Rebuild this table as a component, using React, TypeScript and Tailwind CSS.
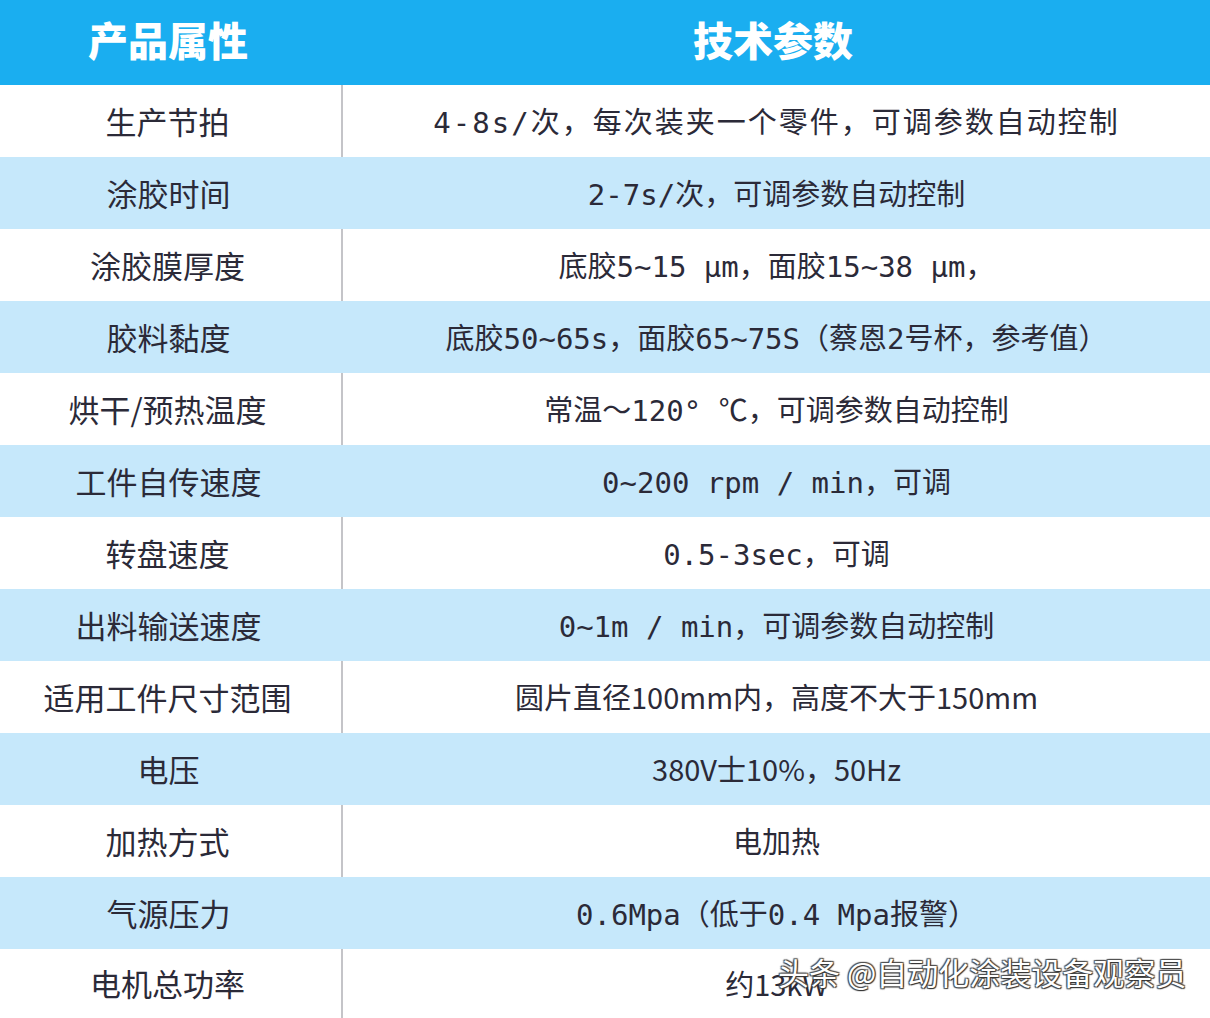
const rows: [string, string, boolean, string?][] = [
  ["生产节拍", "4-8s/次，每次装夹一个零件，可调参数自动控制", true, "tracking-[2px]"],
  ["涂胶时间", "2-7s/次，可调参数自动控制", true],
  ["涂胶膜厚度", "底胶5~15 μm，面胶15~38 μm，", true],
  ["胶料黏度", "底胶50~65s，面胶65~75S（蔡恩2号杯，参考值）", true],
  ["烘干/预热温度", "常温～120° ℃，可调参数自动控制", true],
  ["工件自传速度", "0~200 rpm / min，可调", true],
  ["转盘速度", "0.5-3sec，可调", true],
  ["出料输送速度", "0~1m / min，可调参数自动控制", true],
  ["适用工件尺寸范围", "圆片直径100mm内，高度不大于150mm", false],
  ["电压", "380V士10%，50Hz", false],
  ["加热方式", "电加热", false],
  ["气源压力", "0.6Mpa（低于0.4 Mpa报警）", true],
  ["电机总功率", "约13kW", false],
];

const cjk = '"Noto Sans CJK SC", "Noto Sans", sans-serif';
const mono = '"DejaVu Sans Mono", "Noto Sans CJK SC", monospace';

export default function App() {
  return (
    <div
      className="relative w-[1210px] h-[1018px] overflow-hidden bg-white text-[#2b2a38]"
      style={{ fontFamily: cjk }}
    >
      {/* Header */}
      <div className="flex h-[85px] bg-[#1aaef0] text-white font-black text-[40px] pb-[8px]">
        <div className="w-[336px] flex items-center justify-center">产品属性</div>
        <div className="flex-1 flex items-center justify-center">技术参数</div>
      </div>

      {rows.map(([name, value, useMono, extra], i) => {
        const blue = i % 2 === 1;
        const last = i === rows.length - 1;
        return (
          <div
            key={name}
            className={`flex ${last ? "h-[69px]" : "h-[72px]"} ${blue ? "bg-[#c6e8fb]" : "bg-white"}`}
          >
            <div
              className={`w-[343px] flex items-center justify-center text-[31px] pr-[6px] ${
                blue ? "" : "border-r-2 border-[#c4c4c8]"
              }`}
            >
              {name}
            </div>
            <div
              className={`flex-1 flex items-center justify-center text-[29px] ${
                useMono ? "pt-[6px]" : ""
              } ${extra ?? ""}`}
              style={useMono ? { fontFamily: mono } : undefined}
            >
              {value}
            </div>
          </div>
        );
      })}

      {/* Watermark */}
      <div
        className="absolute left-[778px] top-[949px] text-[31px] text-white whitespace-nowrap"
        style={{
          textShadow:
            "0 0 1px #333, 1px 1px 1px #333, -1px -1px 1px #555, 1px -1px 1px #555, -1px 1px 1px #555",
        }}
      >
        头条 @自动化涂装设备观察员
      </div>
    </div>
  );
}
